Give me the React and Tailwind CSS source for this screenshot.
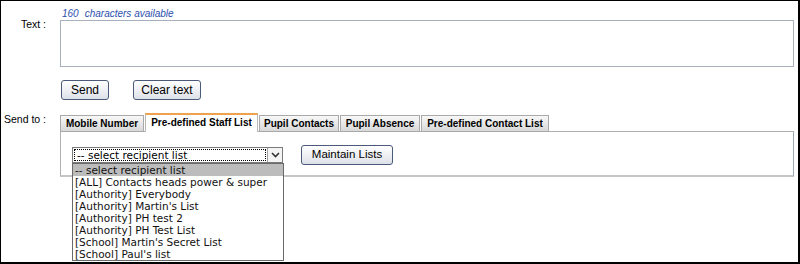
const options = [
  "-- select recipient list",
  "[ALL] Contacts heads power & super",
  "[Authority] Everybody",
  "[Authority] Martin's List",
  "[Authority] PH test 2",
  "[Authority] PH Test List",
  "[School] Martin's Secret List",
  "[School] Paul's list",
]

const tabs = [
  { label: "Mobile Number", w: "w-[84px]" },
  { label: "Pre-defined Staff List", w: "w-[113px]", active: true },
  { label: "Pupil Contacts", w: "w-[80px]" },
  { label: "Pupil Absence", w: "w-[80px]" },
  { label: "Pre-defined Contact List", w: "w-[128px]" },
]

function OldButton({ children, className = "" }) {
  return (
    <button
      type="button"
      className={`h-[20px] rounded-[3px] border border-[#4a5a78] bg-gradient-to-b from-white to-[#dde1e8] leading-none text-black font-['Liberation_Sans',Arial,sans-serif] ${className}`}
    >
      {children}
    </button>
  )
}

export default function App() {
  return (
    <div className="relative w-[800px] h-[264px] overflow-hidden bg-white border-t border-l border-r-2 border-b-2 border-black font-['Liberation_Sans',Arial,sans-serif] text-[10.5px] text-black">
      <div className="pl-[61px] pt-[6px] leading-[13px] italic text-[10px] text-[#2c4fae]">
        <span>160</span>
        <span className="ml-[6px]">characters available</span>
      </div>

      <div className="flex">
        <div className="w-[59px] shrink-0 text-right pr-[14px] leading-[13px] -mt-[2px]">Text :</div>
        <textarea className="w-[734px] h-[47px] border border-[#a8b0bc] resize-none outline-none" />
      </div>

      <div className="flex mt-[13px] pl-[60px]">
        <OldButton className="w-[48px] text-[12px]">Send</OldButton>
        <OldButton className="w-[68px] ml-[24px] text-[12px]">Clear text</OldButton>
      </div>

      <div className="flex mt-[13px]">
        <div className="w-[59px] shrink-0 text-right pr-[14px] leading-[13px]">Send to :</div>
        <div className="flex flex-col">
          <div className="relative z-10 flex items-end gap-[1px] h-[19px] -mb-px text-[10px]">
            {tabs.map((t) =>
              t.active ? (
                <div
                  key={t.label}
                  className={`${t.w} h-[19px] bg-white border-t-2 border-t-[#eea24e] border-x border-x-[#b8b8b8] font-bold text-center leading-[16px]`}
                >
                  {t.label}
                </div>
              ) : (
                <div
                  key={t.label}
                  className={`${t.w} h-[17px] bg-gradient-to-b from-[#f8f8f8] to-[#d8d8d8] border border-[#a9a9a9] font-bold text-center leading-[15px]`}
                >
                  {t.label}
                </div>
              )
            )}
          </div>
          <div className="w-[734px] h-[46px] border border-[#b0b0b0] border-r-[#9aa6ba] border-b-2 border-b-[#c6c6c6] pl-[11px] pt-[15px] flex items-start">
            <div className="relative">
              <div className="w-[211px] h-[16px] border border-[#7a7a7a] bg-white flex items-stretch">
                <div className="flex-1 m-[1px] border border-dotted border-black text-[10.5px] leading-[11px] pl-[2px] font-['DejaVu_Sans',Verdana,sans-serif]">
                  -- select recipient list
                </div>
                <div className="w-[15px] border-l border-[#a0a0a0] bg-[#f4f4f4] flex items-center justify-center">
                  <svg width="9" height="6" viewBox="0 0 9 6">
                    <path d="M1 1 L4.5 4.5 L8 1" fill="none" stroke="#333" strokeWidth="1.6" />
                  </svg>
                </div>
              </div>
              <div className="absolute left-0 top-full w-[212px] border border-[#6a6a6a] bg-white font-['DejaVu_Sans',Verdana,sans-serif] text-[10.5px] text-[#111]">
                {options.map((o, i) => (
                  <div
                    key={o}
                    className={`h-[12px] leading-[12px] pl-[2px] whitespace-nowrap ${i === 0 ? "bg-[#bcbcbc]" : ""}`}
                  >
                    {o}
                  </div>
                ))}
              </div>
            </div>
            <OldButton className="w-[92px] ml-[18px] -mt-[2px] text-[11.5px]">Maintain Lists</OldButton>
          </div>
        </div>
      </div>
    </div>
  )
}
